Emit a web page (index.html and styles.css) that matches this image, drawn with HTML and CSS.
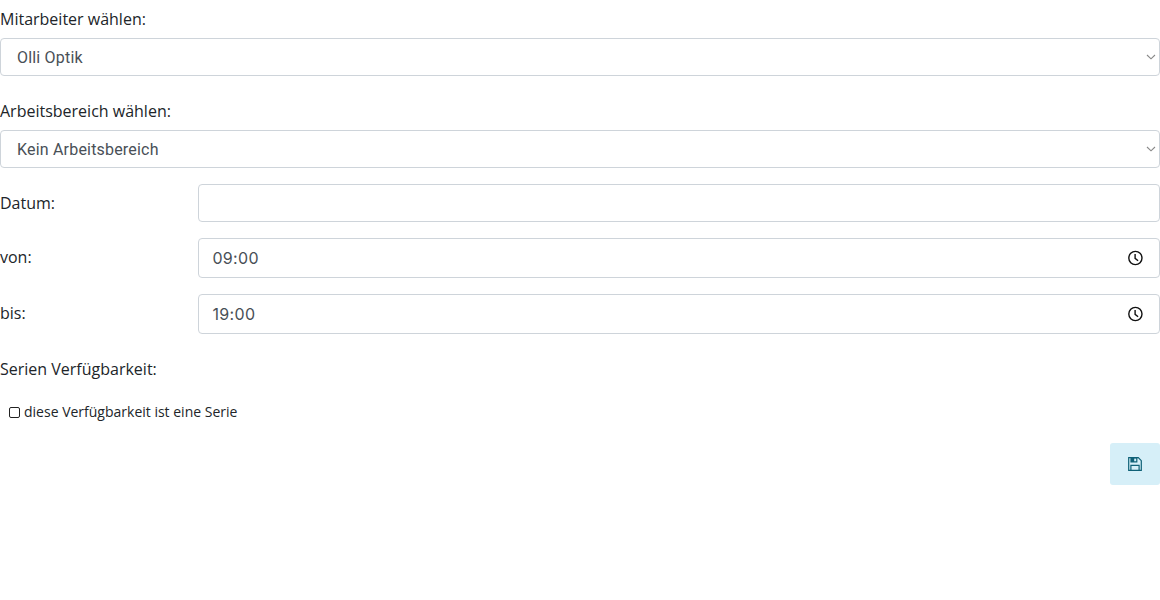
FILE: index.html
```
<!DOCTYPE html>
<html lang="de">
<head>
    <meta charset="UTF-8">
    <meta name="viewport" content="width=device-width, initial-scale=1.0">
    <title>Verfügbarkeit</title>

    <link rel="stylesheet" href="styles.css">
</head>
<body>

    <form>
        <div class="form-group">
            <label for="mitarbeiter">Mitarbeiter wählen:</label>
            <div class="select-wrap">
                <select id="mitarbeiter" class="form-control">
                    <option selected>Olli Optik</option>
                </select>
                <svg class="chevron" viewBox="0 0 10 6"><path d="M1 1l4 3.8L9 1"/></svg>
            </div>
        </div>

        <div class="form-group">
            <label for="bereich">Arbeitsbereich wählen:</label>
            <div class="select-wrap">
                <select id="bereich" class="form-control">
                    <option selected>Kein Arbeitsbereich</option>
                </select>
                <svg class="chevron" viewBox="0 0 10 6"><path d="M1 1l4 3.8L9 1"/></svg>
            </div>
        </div>

        <div class="form-row">
            <label for="datum">Datum:</label>
            <input type="text" id="datum" class="form-control">
        </div>

        <div class="form-row time-row">
            <label for="von">von:</label>
            <div class="form-control time">
                <input type="text" id="von" value="09:00">
                <svg class="clock" viewBox="0 0 16 16"><circle cx="8.4" cy="8" r="6.6"/><path d="M8.1 4v4.4l3 2.3"/></svg>
            </div>
        </div>

        <div class="form-row time-row">
            <label for="bis">bis:</label>
            <div class="form-control time">
                <input type="text" id="bis" value="19:00">
                <svg class="clock" viewBox="0 0 16 16"><circle cx="8.4" cy="8" r="6.6"/><path d="M8.1 4v4.4l3 2.3"/></svg>
            </div>
        </div>

        <p class="serie-title">Serien Verfügbarkeit:</p>
        <div class="serie">
            <input type="checkbox" id="serie">
            <label for="serie">diese Verfügbarkeit ist eine Serie</label>
        </div>

        <div class="actions">
            <button type="submit" class="btn-save" aria-label="Speichern">
                <svg viewBox="0 0 14 14">
                    <path class="outline" d="M.7 .7h9.6l3 3v9.6H.7z"/>
                    <path class="outline" d="M2.9 13V8.4h8.2V13"/>
                    <path class="fill" fill-rule="evenodd" d="M2.4 .7h7v4.8h-7zM6.2 1.4v2.8h2V1.4z"/>
                </svg>
            </button>
        </div>
    </form>

</body>
</html>
```
FILE: styles.css
```
* {
    box-sizing: border-box;
}

body {
    margin: 0;
    background: #fff;
    font-family: "Open Sans", "Noto Sans", sans-serif;
    font-size: 16px;
    line-height: 24px;
    color: #212529;
}

form {
    padding-top: 7px;
}

.form-group {
    margin-bottom: 23px;
}

.form-group label {
    display: block;
    margin-bottom: 7px;
}

.form-group + .form-row {
    margin-top: -7px;
}

.form-control {
    display: block;
    width: 100%;
    height: 38px;
    padding: 6px 12px;
    border: 1px solid #ced4da;
    border-radius: 4px;
    background: #fff;
    color: #495057;
    font-family: Inter, sans-serif;
    font-size: 16px;
    line-height: 24px;
}

/* Selects */
.select-wrap {
    position: relative;
}

select.form-control {
    appearance: none;
    padding: 7px 16px 5px;
    font-family: Roboto, sans-serif;
    letter-spacing: 0.19px;
}

.chevron {
    position: absolute;
    right: 4px;
    top: 16px;
    width: 10px;
    height: 6px;
    fill: none;
    stroke: #888;
    stroke-width: 1.1;
}

/* Label left, input right */
.form-row {
    display: grid;
    grid-template-columns: 198.4px 1fr;
    align-items: center;
    margin-bottom: 16px;
}

.time-row label {
    padding-bottom: 2px;
}

.time {
    display: flex;
    align-items: center;
    justify-content: space-between;
    height: 40px;
    padding: 6px 16px 6px 13px;
}

.time input {
    width: 100px;
    padding: 0;
    border: none;
    outline: none;
    color: #495057;
    font: inherit;
    letter-spacing: 0.35px;
}

.clock {
    width: 16px;
    height: 16px;
    fill: none;
    stroke: #111;
    stroke-width: 1.4;
}

/* Serie */
.serie-title {
    margin: 23px 0 19px;
}

.serie {
    display: flex;
    align-items: center;
    padding-left: 9px;
    font-size: 14px;
}

.serie input {
    appearance: none;
    width: 11px;
    height: 11px;
    margin: 0 4px 0 0;
    border: 1px solid #222;
    border-radius: 2px;
}

.actions {
    display: flex;
    justify-content: flex-end;
    margin-top: 19px;
}

.btn-save {
    display: flex;
    align-items: center;
    justify-content: center;
    width: 50px;
    height: 42px;
    padding: 0;
    border: none;
    border-radius: 3px;
    background: #d6eff8;
    cursor: pointer;
}

.btn-save svg {
    width: 14px;
    height: 14px;
}

.btn-save .outline {
    fill: none;
    stroke: #0f6177;
    stroke-width: 1.2;
}

.btn-save .fill {
    fill: #0f6177;
}
```
